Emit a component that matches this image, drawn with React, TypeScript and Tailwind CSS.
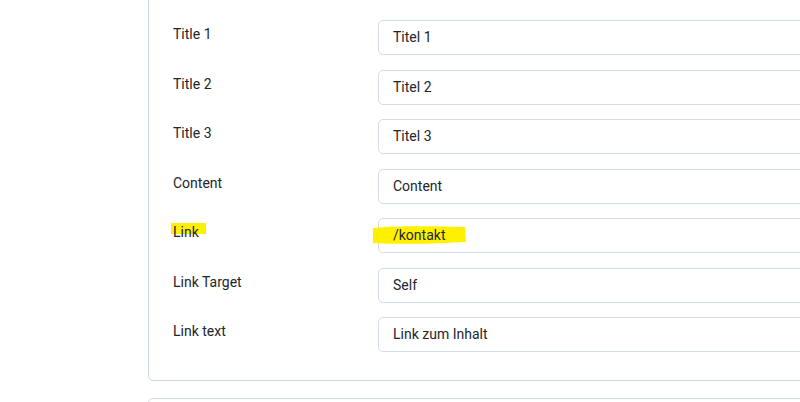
import React from "react";

const fields = [
  { label: "Title 1", value: "Titel 1" },
  { label: "Title 2", value: "Titel 2" },
  { label: "Title 3", value: "Titel 3" },
  { label: "Content", value: "Content" },
  { label: "Link", value: "/kontakt", mark: true },
  { label: "Link Target", value: "Self" },
  { label: "Link text", value: "Link zum Inhalt" },
];

const FieldRow: React.FC<{ label: string; value: string; mark?: boolean }> = ({ label, value, mark }) => (
  <div className="flex items-start mb-[14.5px]">
    <div className="w-[205px] shrink-0 pt-[4px] text-[14px] leading-5 text-[#22262a]">
      <span className="relative">
        {mark && <span className="absolute left-[-2px] top-[-1px] h-[11px] w-[35px] bg-[#fff000]" />}
        <span className="relative">{label}</span>
      </span>
    </div>
    <div className="relative flex h-[35px] flex-1 items-center rounded-[5px] border border-[#d3dcea] bg-white pl-[14px] text-[14px] text-[#22262a]">
      {mark && (
        <svg className="absolute left-[-7px] top-[7px]" width="97" height="19" viewBox="0 0 97 19">
          <path d="M1 2 C20 0 60 0 93 1 L94 16 C70 17 40 19 1 17 Z" fill="#fff000" />
        </svg>
      )}
      <span className="relative">{value}</span>
    </div>
  </div>
);

export default function App() {
  return (
    <div className="h-[402px] w-[800px] overflow-hidden bg-white" style={{ fontFamily: "Roboto, 'Noto Sans', sans-serif" }}>
      <div className="pl-[148px]">
        <div className="-mt-[11px] w-[900px] rounded-[5px] border border-[#ccd7e8] pl-[24px] pr-4 pt-[30px] pb-[13.5px]">
          {fields.map((f) => (
            <FieldRow key={f.label} {...f} />
          ))}
        </div>
        <div className="mt-[17px] h-[40px] w-[900px] rounded-[5px] border border-[#ccd7e8]" />
      </div>
    </div>
  );
}
